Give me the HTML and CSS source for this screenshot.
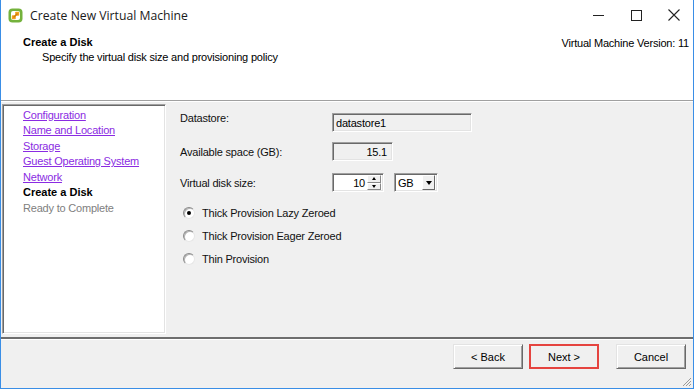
FILE: index.html
```html
<!DOCTYPE html>
<html lang="en">
<head>
  <meta charset="UTF-8" />
  <title>Create New Virtual Machine</title>
  <link rel="stylesheet" href="styles.css">
</head>
<body>
  <div class="win">
    <div class="titlebar">
      <svg class="app-icon" width="15" height="15" viewBox="0 0 15 15">
        <rect x="0.5" y="0.5" width="14" height="14" rx="4" fill="#74b23c"/>
        <rect x="3" y="3" width="9" height="9" rx="2" fill="#fff"/>
        <rect x="3.8" y="7.2" width="4" height="4" rx="0.8" fill="#f2a31c"/>
        <rect x="7.2" y="3.8" width="4" height="4" rx="0.8" fill="#f2a31c"/>
        <path d="M5.5 9.5 L9.5 5.5" stroke="#d07a0c" stroke-width="1.4"/>
      </svg>
      <span class="title">Create New Virtual Machine</span>
      <div class="controls">
        <span class="ctl"><svg width="11" height="11" viewBox="0 0 11 11"><path d="M0 5.5 H11" stroke="#222" stroke-width="1"/></svg></span>
        <span class="ctl"><svg width="11" height="11" viewBox="0 0 11 11"><rect x="0.5" y="0.5" width="10" height="10" fill="none" stroke="#222" stroke-width="1"/></svg></span>
        <span class="ctl"><svg width="12" height="12" viewBox="0 0 12 12"><path d="M0.5 0.5 L11.5 11.5 M11.5 0.5 L0.5 11.5" stroke="#222" stroke-width="1.1"/></svg></span>
      </div>
    </div>

    <div class="header">
      <div class="head-text">
        <div class="step-title">Create a Disk</div>
        <div class="step-desc">Specify the virtual disk size and provisioning policy</div>
      </div>
      <div class="version">Virtual Machine Version: 11</div>
    </div>

    <div class="main">
      <ul class="nav">
        <li><a href="#">Configuration</a></li>
        <li><a href="#">Name and Location</a></li>
        <li><a href="#">Storage</a></li>
        <li><a href="#">Guest Operating System</a></li>
        <li><a href="#">Network</a></li>
        <li class="current">Create a Disk</li>
        <li class="pending">Ready to Complete</li>
      </ul>

      <div class="content">
        <div class="row row-first">
          <span class="label">Datastore:</span>
          <div class="field readonly datastore">datastore1</div>
        </div>
        <div class="row row-second">
          <span class="label">Available space (GB):</span>
          <div class="field readonly space">15.1</div>
        </div>
        <div class="row row-third">
          <span class="label">Virtual disk size:</span>
          <div class="field spinner">
            <span class="spin-value">10</span>
            <span class="spin">
              <span class="spin-btn"><i class="tri-up"></i></span>
              <span class="spin-btn"><i class="tri-down"></i></span>
            </span>
          </div>
          <div class="field select">
            <span class="select-value">GB</span>
            <span class="drop-btn"><i class="tri-drop"></i></span>
          </div>
        </div>

        <div class="radios">
          <label class="radio"><span class="dot checked"></span>Thick Provision Lazy Zeroed</label>
          <label class="radio"><span class="dot"></span>Thick Provision Eager Zeroed</label>
          <label class="radio"><span class="dot"></span>Thin Provision</label>
        </div>
      </div>
    </div>

    <div class="footer">
      <button class="btn">&lt; Back</button>
      <button class="btn btn-next">Next &gt;</button>
      <button class="btn btn-cancel">Cancel</button>
      <svg class="grip" width="10" height="10" viewBox="0 0 10 10">
        <path d="M9 1 L1 9 M9 4 L4 9 M9 7 L7 9" stroke="#9a9a9a" stroke-width="1"/>
      </svg>
    </div>
  </div>
</body>
</html>
```

FILE: styles.css
```css
body {
  margin: 0;
  font-family: "Liberation Sans", Arial, sans-serif;
  font-size: 11px;
  letter-spacing: -0.2px;
  color: #000;
  background: #fff;
}
.win {
  position: relative;
  width: 694px;
  height: 389px;
  box-sizing: border-box;
  border-left: 1px solid #3a8ee6;
  border-right: 1px solid #3a8ee6;
  border-bottom: 1px solid #3a8ee6;
  background: #f0f0f0;
  display: flex;
  flex-direction: column;
}
.titlebar {
  height: 30px;
  background: #fff;
  display: flex;
  align-items: center;
  padding-left: 7px;
}
.app-icon {
  display: block;
}
.title {
  margin-left: 7px;
  font-family: "Open Sans", "Noto Sans", sans-serif;
  font-size: 12.2px;
  letter-spacing: 0;
  color: #1a1a1a;
}
.controls {
  margin-left: auto;
  display: flex;
  height: 30px;
}
.ctl {
  width: 38px;
  height: 30px;
  display: flex;
  align-items: center;
  justify-content: center;
}
.ctl svg {
  display: block;
}
.header {
  height: 71px;
  flex: none;
  box-sizing: border-box;
  background: #fff;
  border-bottom: 1px solid #a0a0a0;
  display: flex;
  justify-content: space-between;
  padding: 5px 4px 0 22px;
}
.step-title {
  font-weight: bold;
  letter-spacing: 0;
  line-height: 14px;
}
.step-desc {
  margin-left: 19px;
  line-height: 16px;
}
.version {
  line-height: 16px;
}
.main {
  height: 236px;
  flex: none;
  box-sizing: border-box;
  border-top: 1px solid #fff;
  padding-top: 2px;
  display: flex;
}
.nav {
  list-style: none;
  margin: 0 0 0 1px;
  padding: 2.5px 0 0 20px;
  width: 164px;
  height: 230px;
  box-sizing: border-box;
  background: #fff;
  border-top: 1px solid #a0a0a0;
  border-left: 1px solid #a0a0a0;
  border-bottom: 1px solid #fff;
  border-right: 1px solid #fff;
  box-shadow: inset 1px 1px #696969, inset -1px -1px #e3e3e3;
}
.nav li {
  line-height: 15.5px;
  height: 15.5px;
}
.nav a {
  color: #8a2be2;
  text-decoration: underline;
}
.nav .current {
  font-weight: bold;
  letter-spacing: 0;
}
.nav .pending {
  color: #808080;
}
.content {
  flex: 1;
  padding: 9px 0 0 14px;
}
.row {
  display: flex;
  align-items: center;
  height: 19px;
}
.row-first .label {
  align-self: flex-start;
  margin-top: -1px;
  line-height: 13px;
}
.row-second {
  margin-top: 10px;
}
.row-third {
  margin-top: 12px;
}
.label {
  width: 152px;
  flex: none;
  color: #111;
}
.field {
  height: 19px;
  box-sizing: border-box;
  border-top: 1px solid #a0a0a0;
  border-left: 1px solid #a0a0a0;
  border-bottom: 1px solid #fff;
  border-right: 1px solid #fff;
  box-shadow: inset 1px 1px #696969, inset -1px -1px #e3e3e3;
  display: flex;
  align-items: center;
}
.readonly {
  background: #f0f0f0;
}
.datastore {
  width: 140px;
  padding-left: 3px;
}
.space {
  width: 61px;
  justify-content: flex-end;
  padding-right: 5px;
}
.spinner {
  width: 52px;
  background: #fff;
  justify-content: flex-end;
  padding-right: 2px;
}
.spin-value {
  margin-right: 2px;
}
.spin {
  width: 14px;
  height: 15px;
  display: flex;
  flex-direction: column;
}
.spin-btn {
  flex: 1;
  background: #f0f0f0;
  border-top: 1px solid #fff;
  border-left: 1px solid #fff;
  border-bottom: 1px solid #888;
  border-right: 1px solid #888;
  display: flex;
  align-items: center;
  justify-content: center;
}
.tri-up {
  width: 0;
  height: 0;
  border-left: 2.5px solid transparent;
  border-right: 2.5px solid transparent;
  border-bottom: 3px solid #000;
}
.tri-down {
  width: 0;
  height: 0;
  border-left: 2.5px solid transparent;
  border-right: 2.5px solid transparent;
  border-top: 3px solid #000;
}
.select {
  margin-left: 10px;
  width: 44px;
  background: #fff;
  padding: 0 2px 0 3px;
  justify-content: space-between;
}
.drop-btn {
  width: 13px;
  height: 15px;
  box-sizing: border-box;
  background: #f0f0f0;
  border-top: 1px solid #fff;
  border-left: 1px solid #fff;
  border-bottom: 1px solid #696969;
  border-right: 1px solid #696969;
  display: flex;
  align-items: center;
  justify-content: center;
}
.tri-drop {
  width: 0;
  height: 0;
  border-left: 3.5px solid transparent;
  border-right: 3.5px solid transparent;
  border-top: 4px solid #000;
}
.radios {
  margin-top: 9px;
}
.radio {
  display: flex;
  align-items: center;
  height: 23px;
  color: #111;
}
.dot {
  width: 12px;
  height: 12px;
  box-sizing: border-box;
  margin: 0 7px 0 3px;
  border-radius: 50%;
  background: #fff;
  border: 1px solid;
  border-color: #8a8a8a #e6e6e6 #e6e6e6 #8a8a8a;
  box-shadow: inset 1px 1px #b5b5b5;
  display: flex;
  align-items: center;
  justify-content: center;
}
.dot.checked::after {
  content: "";
  width: 4px;
  height: 4px;
  border-radius: 50%;
  background: #000;
}
.footer {
  flex: 1;
  border-top: 2px solid #6e6e6e;
  box-shadow: inset 0 1px #fff;
  display: flex;
  justify-content: flex-end;
  align-items: flex-start;
  padding: 5px 7px 0 0;
}
.btn {
  width: 70px;
  height: 25px;
  font-family: "Liberation Sans", Arial, sans-serif;
  font-size: 11px;
  color: #000;
  background: #f0f0f0;
  border-top: 1px solid #e3e3e3;
  border-left: 1px solid #e3e3e3;
  border-bottom: 1px solid #696969;
  border-right: 1px solid #696969;
  box-shadow: inset 1px 1px #fff, inset -1px -1px #a0a0a0;
  padding: 0;
  margin-left: 6px;
}
.btn-next {
  border: 2px solid #e5443f;
  box-shadow: none;
}
.btn-cancel {
  margin-left: 17px;
}
.grip {
  position: absolute;
  right: 1px;
  bottom: 1px;
}
```
